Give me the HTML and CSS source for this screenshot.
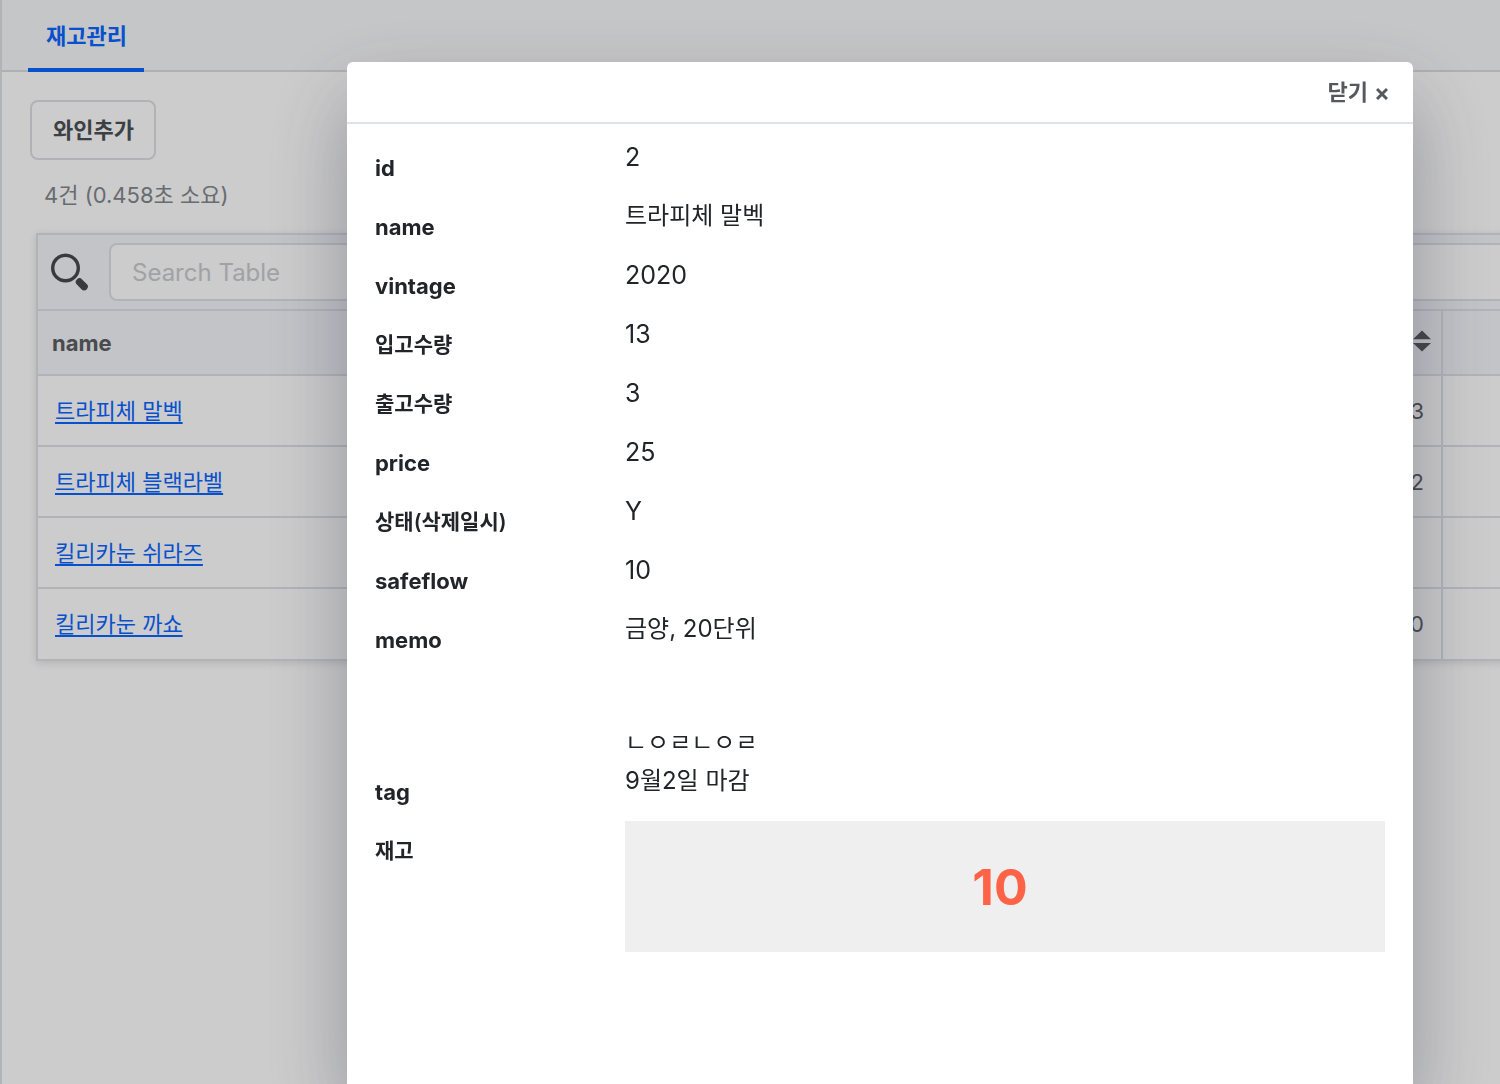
FILE: index.html
```html
<!DOCTYPE html>
<html lang="ko">
<head>
<meta charset="utf-8">
<meta name="viewport" content="width=device-width, initial-scale=1">
<title>재고관리</title>
<link rel="stylesheet" href="styles.css">
</head>
<body>
<div class="page">
  <nav class="tabs">
    <a class="tab" href="#stock" aria-current="page">재고관리</a>
  </nav>
  <main class="content" id="stock">
    <button class="add-button" type="button">와인추가</button>
    <p class="summary">4건 (0.458초 소요)</p>
    <section class="grid-panel">
      <div class="search-row">
        <label class="search-label" for="search" aria-label="Search Table">
          <svg width="38" height="38" viewBox="0 0 38 38" fill="none" stroke="currentColor" stroke-linecap="round" aria-hidden="true">
            <circle cx="14.5" cy="15" r="12.8" stroke-width="3.4"/>
            <path d="M28.5 29l4.6 4.6" stroke-width="7.4"/>
          </svg>
        </label>
        <input class="search-input" id="search" type="text" placeholder="Search Table">
      </div>
      <table class="stock-table">
        <colgroup>
          <col>
          <col class="col-stock">
          <col class="col-last">
        </colgroup>
        <thead>
          <tr>
            <th scope="col">name</th>
            <th class="stock-head" scope="col">
              <button class="sort-button" type="button" aria-label="정렬">
                <svg width="18" height="22" viewBox="0 0 18 22" fill="currentColor" aria-hidden="true">
                  <path d="M9 0.5L18 9.2H0zM0 13h18L9 21.5z"/>
                </svg>
              </button>
            </th>
            <th></th>
          </tr>
        </thead>
        <tbody>
          <tr><td><a href="#wine">트라피체 말벡</a></td><td class="number">3</td><td></td></tr>
          <tr><td><a href="#wine">트라피체 블랙라벨</a></td><td class="number">2</td><td></td></tr>
          <tr><td><a href="#wine">킬리카눈 쉬라즈</a></td><td class="number"></td><td></td></tr>
          <tr><td><a href="#wine">킬리카눈 까쇼</a></td><td class="number">0</td><td></td></tr>
        </tbody>
      </table>
    </section>
  </main>
</div>

<div class="backdrop">
  <div class="modal" role="dialog" aria-modal="true" id="wine">
    <header class="modal-header">
      <button class="close-button" type="button">닫기
        <svg width="12" height="16" viewBox="0 0 12 16" fill="none" stroke="currentColor" stroke-width="3" aria-hidden="true">
          <path d="M1 5l10 10M11 5L1 15"/>
        </svg>
      </button>
    </header>
    <dl class="details">
      <div class="row"><dt class="latin">id</dt><dd class="latin">2</dd></div>
      <div class="row"><dt class="latin">name</dt><dd>트라피체 말벡</dd></div>
      <div class="row"><dt class="latin">vintage</dt><dd class="latin">2020</dd></div>
      <div class="row"><dt>입고수량</dt><dd class="latin">13</dd></div>
      <div class="row"><dt>출고수량</dt><dd class="latin">3</dd></div>
      <div class="row"><dt class="latin">price</dt><dd class="latin">25</dd></div>
      <div class="row"><dt>상태(삭제일시)</dt><dd class="latin">Y</dd></div>
      <div class="row"><dt class="latin">safeflow</dt><dd class="latin">10</dd></div>
      <div class="row row-memo"><dt class="latin">memo</dt><dd>금양, 20단위<br><br><br>ㄴㅇㄹㄴㅇㄹ</dd></div>
      <div class="row"><dt class="latin">tag</dt><dd>9월2일 마감</dd></div>
      <div class="row"><dt>재고</dt><dd class="stock-count">10</dd></div>
    </dl>
  </div>
</div>
</body>
</html>
```

FILE: styles.css
```css
* {
  box-sizing: border-box;
}

body {
  margin: 0;
  background: #fff;
  color: #212529;
  font-family: Inter, "Noto Sans CJK KR", sans-serif;
  font-size: 22px;
  line-height: 38px;
}

button,
input {
  font: inherit;
}

.page {
  min-height: 100vh;
  overflow: hidden;
  border-left: 2px solid #dce0e6;
}

.tabs {
  display: flex;
  height: 72px;
  padding-left: 26px;
  border-bottom: 2px solid #dcdcde;
  background: #f7f8fa;
}

.tab {
  height: 72px;
  padding: 17px 17px 0 18px;
  border-bottom: 4px solid #0b66ff;
  color: #0b66ff;
  font-weight: 600;
  text-decoration: none;
}

.content {
  padding: 28px 0 0 28px;
}

.add-button {
  display: block;
  height: 60px;
  padding: 0 20px 0 21px;
  border: 2px solid #dcdfe5;
  border-radius: 8px;
  background: #fff;
  color: #4c5157;
  font-weight: 600;
}

.summary {
  margin: 16px 0 19px 14px;
  color: #82878d;
}

.grid-panel {
  margin: 0 -24px 0 6px;
  border: 2px solid #dfe0e8;
  box-shadow: 0 2px 8px rgba(0, 0, 0, 0.12);
}

.search-row {
  display: flex;
  align-items: center;
  gap: 20px;
  height: 74px;
  padding: 0 24px 0 13px;
  background: #f3f5f9;
}

.search-label {
  display: flex;
  color: #48494c;
}

.search-input {
  flex: 1;
  min-width: 0;
  height: 58px;
  margin-right: -16px;
  padding: 0 21px;
  border: 2px solid #dfe0e8;
  border-radius: 8px;
  background: #fff;
  font-size: 24px;
}

.search-input::placeholder {
  color: #c9cbd0;
}

.stock-table {
  width: 100%;
  border-collapse: collapse;
  table-layout: fixed;
}

.col-stock {
  width: 240px;
}

.col-last {
  width: 80px;
}

.stock-table th {
  height: 65px;
  padding: 0 14px;
  border-top: 2px solid #dfe0e8;
  background: #f3f5f9;
  color: #5c5e62;
  font-weight: 700;
  text-align: left;
}

.stock-table td {
  height: 71px;
  padding: 0 17px;
  border-top: 2px solid #dfe0e8;
  color: #5c5e62;
}

.stock-table th:last-child,
.stock-table td:last-child {
  border-left: 2px solid #dfe0e8;
}

.stock-table a {
  color: #0b66ff;
  text-underline-offset: 3px;
  text-decoration-thickness: 2px;
}

.stock-table .number {
  text-align: right;
}

.stock-table .stock-head {
  padding: 0 10px 3px 0;
}

.sort-button {
  display: block;
  margin-left: auto;
  padding: 0;
  border: 0;
  background: none;
  color: #56575a;
}

.sort-button svg {
  display: block;
}

.backdrop {
  position: fixed;
  inset: 0;
  display: flex;
  padding: 62px 87px 0 347px;
  overflow: hidden;
  background: rgba(0, 0, 0, 0.2);
}

.modal {
  flex: 1;
  border-radius: 6px 6px 0 0;
  background: #fff;
  box-shadow: 0 36px 80px rgba(44, 46, 72, 0.36);
}

.modal-header {
  display: flex;
  justify-content: flex-end;
  align-items: center;
  height: 62px;
  padding-right: 25px;
  border-bottom: 2px solid #dde3ea;
}

.close-button {
  display: flex;
  align-items: center;
  gap: 8px;
  padding: 0;
  border: 0;
  background: none;
  color: #55585d;
  font-weight: 600;
}

.details {
  margin: 0;
  padding: 14px 28px;
}

.row {
  display: grid;
  grid-template-columns: 250px 1fr;
  padding-bottom: 21px;
}

.row-memo {
  padding-bottom: 0;
}

.row dt {
  height: 38px;
  padding-top: 11px;
  font-size: 21px;
  font-weight: 600;
}

.row dt.latin {
  font-size: 22px;
  font-weight: 700;
}

.row dd {
  margin: 0;
  font-size: 24px;
}

.row dd.latin {
  font-size: 25px;
}

.row .stock-count {
  padding: 47px 10px 46px 0;
  background: #efefef;
  color: #ff6347;
  font-size: 50px;
  font-weight: 700;
  text-align: center;
}
```
